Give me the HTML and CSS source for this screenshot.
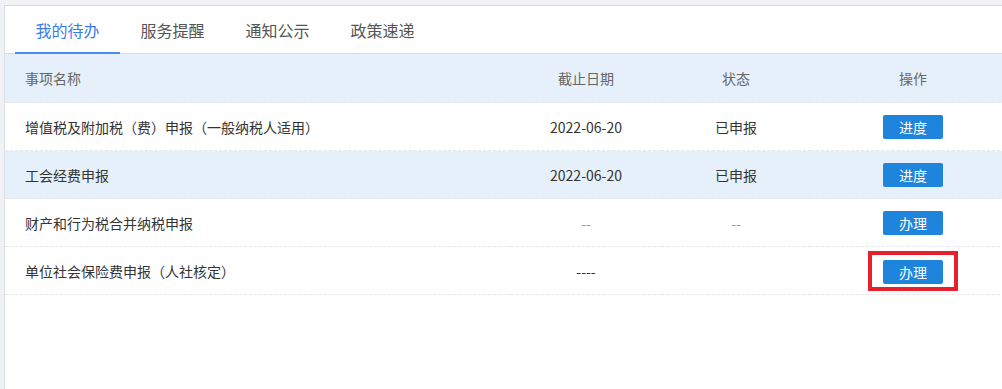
FILE: index.html
```html
<!DOCTYPE html>
<html lang="zh-CN">
  <head>
    <meta charset="UTF-8" />
    <title>我的待办</title>
    <link rel="stylesheet" href="styles.css">
  </head>
  <body>
    <div class="panel">
      <div class="tabs">
        <span class="tab active">我的待办</span>
        <span class="tab">服务提醒</span>
        <span class="tab">通知公示</span>
        <span class="tab">政策速递</span>
      </div>
      <table class="todo-table">
        <colgroup>
          <col class="col-name" />
          <col class="col-date" />
          <col class="col-status" />
          <col class="col-op" />
        </colgroup>
        <thead>
          <tr>
            <th class="name">事项名称</th>
            <th>截止日期</th>
            <th>状态</th>
            <th>操作</th>
          </tr>
        </thead>
        <tbody>
          <tr>
            <td class="name">增值税及附加税（费）申报（一般纳税人适用）</td>
            <td>2022-06-20</td>
            <td>已申报</td>
            <td><button class="btn">进度</button></td>
          </tr>
          <tr class="striped">
            <td class="name">工会经费申报</td>
            <td>2022-06-20</td>
            <td>已申报</td>
            <td><button class="btn">进度</button></td>
          </tr>
          <tr>
            <td class="name">财产和行为税合并纳税申报</td>
            <td class="muted">--</td>
            <td class="muted">--</td>
            <td><button class="btn">办理</button></td>
          </tr>
          <tr>
            <td class="name">单位社会保险费申报（人社核定）</td>
            <td>----</td>
            <td></td>
            <td><span class="mark"><button class="btn">办理</button></span></td>
          </tr>
        </tbody>
      </table>
    </div>
  </body>
</html>
```

FILE: styles.css
```css
body {
  margin: 0;
  padding: 5px 0 0 4px;
  background: #f0f2f5;
  font-family: "Noto Sans CJK SC", "Noto Sans", sans-serif;
  text-spacing-trim: space-all;
  overflow: hidden;
  height: 389px;
  box-sizing: border-box;
}
.panel {
  width: 1010px;
  height: 400px;
  background: #fff;
  border-top: 1px solid #d9d9d9;
  border-left: 1px solid #dcdfe6;
}
.tabs {
  display: flex;
  height: 47px;
  padding-left: 10px;
  border-bottom: 1px solid #d8dce3;
}
.tab {
  width: 105px;
  box-sizing: border-box;
  text-align: center;
  font-size: 16px;
  line-height: 48px;
  color: #555;
}
.tab.active {
  color: #3a7cf2;
  border-bottom: 2px solid #4a8af4;
  height: 48px;
  line-height: 48px;
}
.todo-table {
  width: 1010px;
  border-collapse: collapse;
  table-layout: fixed;
  font-size: 14px;
}
.col-name { width: 506px; }
.col-date { width: 150px; }
.col-status { width: 150px; }
.col-op { width: 204px; }
.todo-table th,
.todo-table td {
  height: 47px;
  padding: 0;
  text-align: center;
  border-bottom: 1px dashed #e3e6ea;
  color: #333;
}
.todo-table th {
  height: 48px;
  background: #e6f0fa;
  font-weight: normal;
  color: #666;
}
.todo-table .name {
  text-align: left;
  padding-left: 20px;
}
.striped td {
  background: #e6f0fa;
}
.muted {
  color: #999 !important;
}
.btn {
  width: 60px;
  height: 24px;
  border: none;
  border-radius: 2px;
  background: #1e84dc;
  color: #fff;
  font-family: inherit;
  font-size: 14px;
  padding: 0;
  cursor: pointer;
}
.mark {
  display: inline-block;
  border: 4px solid #e8202a;
  padding: 5px 11px 3px 11px;
  line-height: 0;
}
```
